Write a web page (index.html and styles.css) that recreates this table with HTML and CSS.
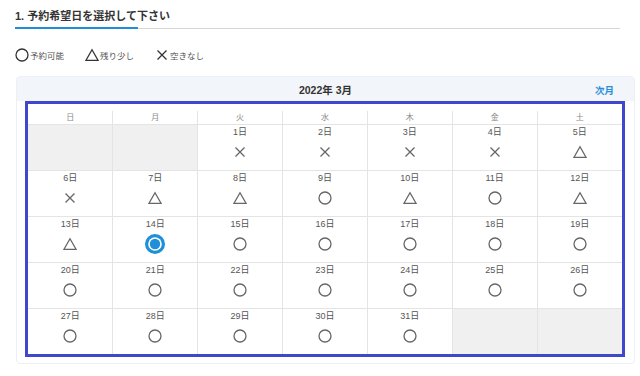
FILE: index.html
```html
<!DOCTYPE html>
<html lang="ja">
<head>
    <meta charset="UTF-8">
    <meta name="viewport" content="width=device-width, initial-scale=1.0">
    <title>予約カレンダー</title>
    <link rel="stylesheet" href="styles.css">
</head>
<body>
    <svg class="defs" width="0" height="0">
        <symbol id="i-ok" viewBox="0 0 14 14">
            <circle cx="7" cy="7" r="6" fill="none" stroke="currentColor" stroke-width="1.3"/>
        </symbol>
        <symbol id="i-few" viewBox="0 0 14 14">
            <polygon points="7,1.8 13,12.3 1,12.3" fill="none" stroke="currentColor" stroke-width="1.3" stroke-linejoin="miter"/>
        </symbol>
        <symbol id="i-full" viewBox="0 0 14 14">
            <path d="M2.5 2.5 L11.5 11.5 M11.5 2.5 L2.5 11.5" fill="none" stroke="currentColor" stroke-width="1.3"/>
        </symbol>
        <symbol id="i-sel" viewBox="0 0 20 20">
            <circle cx="10" cy="10" r="10" fill="#1f8fd8"/>
            <circle cx="10" cy="10" r="6.8" fill="#fff"/>
            <circle cx="10" cy="10" r="5.2" fill="#1f8fd8"/>
        </symbol>
    </svg>

    <div class="page">
        <h2 class="step-title"><span>1. 予約希望日を選択して下さい</span></h2>

        <ul class="legend">
            <li><svg class="icon"><use href="#i-ok"/></svg>予約可能</li>
            <li><svg class="icon"><use href="#i-few"/></svg>残り少し</li>
            <li><svg class="icon"><use href="#i-full"/></svg>空きなし</li>
        </ul>

        <div class="calendar">
            <div class="cal-head">
                <span class="cal-month">2022年 3月</span>
                <a href="#" class="cal-next">次月</a>
            </div>
            <div class="cal-body">
                <div class="cal-frame">
                    <table id="calTable">
                        <thead>
                            <tr>
                                <th>日</th><th>月</th><th>火</th><th>水</th><th>木</th><th>金</th><th>土</th>
                            </tr>
                        </thead>
                        <tbody></tbody>
                    </table>
                </div>
            </div>
        </div>
    </div>

    <script>
        // o = 予約可能, t = 残り少し, x = 空きなし, s = 選択中
        const status = 'xxxxt' + 'xttotot' + 'tsooooo' + 'ooooooo' + 'ooooo';
        const firstWeekday = 2;
        const days = 31;
        const icons = { o: 'i-ok', t: 'i-few', x: 'i-full', s: 'i-sel' };

        const tbody = document.querySelector('#calTable tbody');
        let row = tbody.insertRow();
        for (let i = 0; i < firstWeekday; i++) {
            row.insertCell().className = 'off';
        }
        for (let d = 1; d <= days; d++) {
            if (row.cells.length === 7) row = tbody.insertRow();
            const cell = row.insertCell();
            const s = status[d - 1];
            cell.innerHTML = `<div class="date">${d}日</div>
                <div class="mark${s === 's' ? ' selected' : ''}"><svg class="icon"><use href="#${icons[s]}"/></svg></div>`;
        }
        while (row.cells.length < 7) {
            row.insertCell().className = 'off';
        }
    </script>
</body>
</html>
```

FILE: styles.css
```css
body {
    margin: 0;
    font-family: "Liberation Sans", "Noto Sans CJK JP", sans-serif;
    color: #333;
    background: #fff;
}
.defs {
    position: absolute;
    width: 0;
    height: 0;
}
.page {
    padding: 9px 5px 0 15px;
}
.step-title {
    margin: 0;
    width: 605px;
    font-size: 11px;
    font-weight: bold;
    line-height: 14px;
    padding-bottom: 4px;
    border-bottom: 1px solid #d6d6d6;
}
.step-title span {
    display: inline-block;
    padding-bottom: 4px;
    margin-bottom: -5px;
    border-bottom: 2px solid #1f8fd8;
    width: 123px;
    white-space: nowrap;
}
.legend {
    list-style: none;
    margin: 19px 0 0;
    padding: 0;
    display: flex;
    height: 14px;
}
.legend li {
    display: flex;
    align-items: center;
    font-size: 8.5px;
    color: #555;
    margin-right: 21px;
}
.legend .icon {
    width: 14px;
    height: 14px;
    margin-right: 1px;
    color: #333;
}
.calendar {
    margin-top: 14px;
    margin-left: 1px;
    width: 617px;
    border: 1px solid #eceff5;
    border-radius: 4px;
    overflow: hidden;
}
.cal-head {
    position: relative;
    height: 24px;
    background: #f2f5fa;
    display: flex;
    align-items: center;
    justify-content: center;
}
.cal-month {
    font-size: 10.5px;
    font-weight: bold;
    color: #333;
}
.cal-next {
    position: absolute;
    right: 20px;
    top: 6px;
    font-size: 9.5px;
    font-weight: bold;
    color: #2a8fd6;
    text-decoration: none;
}
.cal-body {
    padding: 0 8px 6px 8px;
}
.cal-frame {
    width: 594px;
    border: 3px solid #3f48cc;
    padding-top: 7px;
    background: #fff;
}
table {
    width: 100%;
    border-collapse: collapse;
    border-style: hidden;
    table-layout: fixed;
}
th, td {
    border: 1px solid #e4e4e4;
    text-align: center;
}
th {
    height: 13px;
    padding: 0;
    font-size: 8px;
    font-weight: normal;
    color: #888;
    line-height: 13px;
}
td {
    height: 44px;
    padding: 1px 0 0;
    vertical-align: top;
    color: #555;
}
td.off {
    background: #f0f0f0;
}
.date {
    font-size: 9px;
    line-height: 12px;
}
.mark {
    height: 20px;
    margin-top: 4px;
    display: flex;
    align-items: center;
    justify-content: center;
    color: #666;
}
.mark .icon {
    width: 14px;
    height: 14px;
}
.mark.selected .icon {
    width: 20px;
    height: 20px;
}
```
